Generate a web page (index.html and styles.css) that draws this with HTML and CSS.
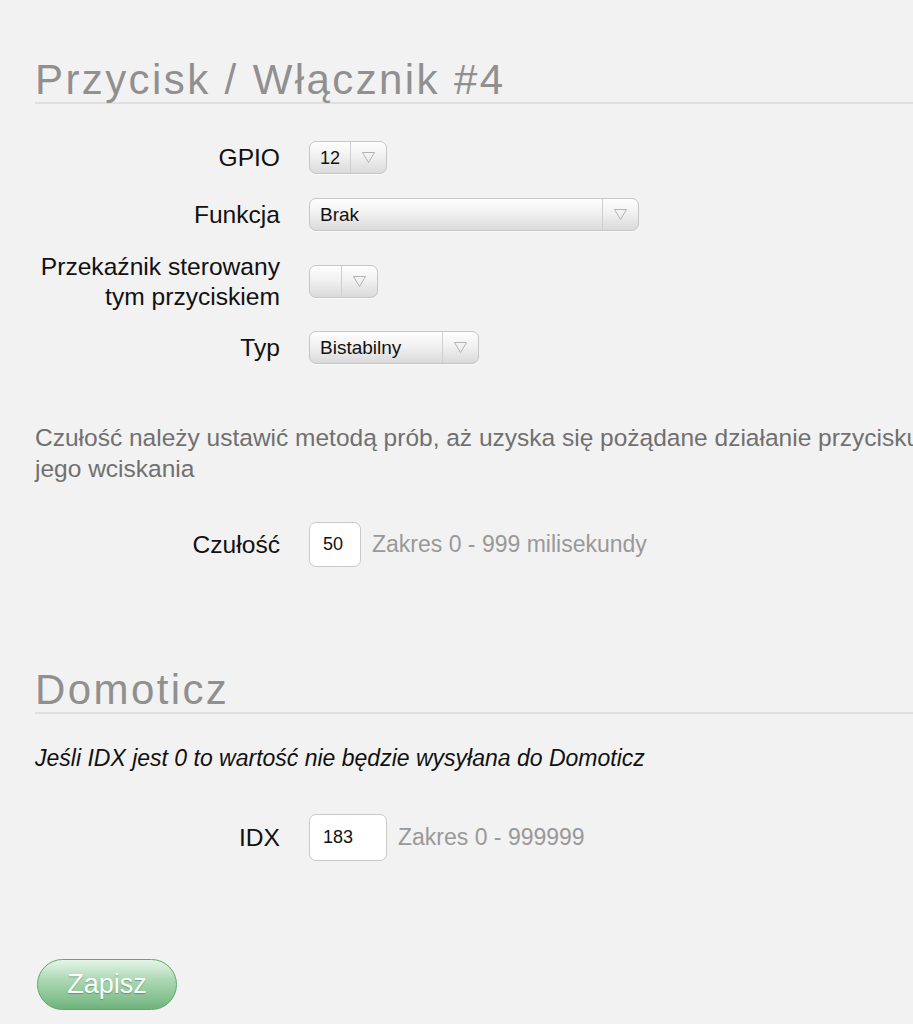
FILE: index.html
```html
<!DOCTYPE html>
<html lang="pl">
<head>
<meta charset="utf-8">
<title>Przycisk / Włącznik #4</title>
<link rel="stylesheet" href="styles.css">
</head>
<body>
<div class="page">
  <section class="section">
    <h2 class="section-title">Przycisk / Włącznik #4</h2>
    <div class="form">
      <div class="row row-gpio">
        <label class="label">GPIO</label>
        <div class="select select-gpio"><span class="select-value">12</span><span class="select-arrow"><svg width="13" height="11" viewBox="0 0 13 11"><polygon points="0.5,0.5 12.5,0.5 6.5,10.5" fill="none" stroke="#b3b3b3" stroke-width="1"/></svg></span></div>
      </div>
      <div class="row row-funkcja">
        <label class="label">Funkcja</label>
        <div class="select select-funkcja"><span class="select-value">Brak</span><span class="select-arrow"><svg width="13" height="11" viewBox="0 0 13 11"><polygon points="0.5,0.5 12.5,0.5 6.5,10.5" fill="none" stroke="#b3b3b3" stroke-width="1"/></svg></span></div>
      </div>
      <div class="row row-relay">
        <label class="label label-multi">Przekaźnik sterowany<br>tym przyciskiem</label>
        <div class="select select-relay"><span class="select-value"></span><span class="select-arrow"><svg width="13" height="11" viewBox="0 0 13 11"><polygon points="0.5,0.5 12.5,0.5 6.5,10.5" fill="none" stroke="#b3b3b3" stroke-width="1"/></svg></span></div>
      </div>
      <div class="row row-typ">
        <label class="label">Typ</label>
        <div class="select select-typ"><span class="select-value">Bistabilny</span><span class="select-arrow"><svg width="13" height="11" viewBox="0 0 13 11"><polygon points="0.5,0.5 12.5,0.5 6.5,10.5" fill="none" stroke="#b3b3b3" stroke-width="1"/></svg></span></div>
      </div>
    </div>
    <p class="note">Czułość należy ustawić metodą prób, aż uzyska się pożądane działanie przycisku podczas jego wciskania</p>
    <div class="row row-czulosc">
      <label class="label">Czułość</label>
      <div class="control"><div class="input input-small">50</div><span class="hint">Zakres 0 - 999 milisekundy</span></div>
    </div>
  </section>
  <section class="section section-domoticz">
    <h2 class="section-title">Domoticz</h2>
    <p class="info">Jeśli IDX jest 0 to wartość nie będzie wysyłana do Domoticz</p>
    <div class="row row-idx">
      <label class="label">IDX</label>
      <div class="control"><div class="input input-wide">183</div><span class="hint">Zakres 0 - 999999</span></div>
    </div>
  </section>
  <button class="btn-save">Zapisz</button>
</div>
</body>
</html>
```
FILE: styles.css
```css
html, body {
  margin: 0;
  padding: 0;
  background: #f2f2f2;
  overflow-x: hidden;
}
body {
  font-family: "Liberation Sans", Arial, sans-serif;
  color: #111;
}
.page {
  width: 1010px;
  padding: 58px 0 40px 35px;
}
.section-title {
  margin: 0;
  font-family: "Liberation Sans", Arial, sans-serif;
  font-weight: 300;
  font-size: 42px;
  line-height: 44px;
  letter-spacing: 2.4px;
  color: #909090;
  border-bottom: 2px solid #e0e0e0;
}
.form {
  margin-top: 37px;
}
.row {
  display: grid;
  grid-template-columns: 245px auto;
  column-gap: 29px;
  align-items: center;
  justify-content: start;
}
.row-funkcja { margin-top: 24px; }
.row-relay { margin-top: 19px; }
.row-typ { margin-top: 19px; }
.label {
  text-align: right;
  font-size: 24.6px;
  line-height: 30px;
  color: #111;
}
.label-multi {
  padding-top: 2px;
}
.select {
  display: flex;
  height: 31px;
  border: 1px solid #c6c6c6;
  border-radius: 7px;
  background: linear-gradient(#fefefe, #f1f1f1 45%, #dadada);
  box-shadow: 0 1px 0 rgba(255,255,255,0.6);
  box-sizing: content-box;
}
.select-value {
  flex: 1;
  padding-left: 10px;
  font-size: 19px;
  line-height: 32px;
  color: #111;
}
.select-arrow {
  width: 35px;
  border-left: 1px solid #cfcfcf;
  display: flex;
  align-items: center;
  justify-content: center;
}
.select-gpio { width: 76px; }
.select-gpio .select-value { font-size: 18px; }
.select-funkcja { width: 328px; }
.select-relay { width: 67px; }
.select-typ { width: 168px; }
.note {
  margin: 58px 0 0;
  font-size: 24.5px;
  line-height: 31px;
  color: #707070;
}
.row-czulosc { margin-top: 38px; }
.control {
  display: flex;
  align-items: center;
  gap: 11px;
}
.input {
  box-sizing: border-box;
  background: #fff;
  border: 1px solid #c9c9c9;
  border-radius: 7px;
  font-size: 18px;
  color: #111;
  padding-left: 13px;
  display: flex;
  align-items: center;
}
.input-small { width: 52px; height: 45px; }
.input-wide { width: 78px; height: 47px; }
.hint {
  font-size: 23px;
  color: #999;
}
.section-domoticz {
  margin-top: 101px;
}
.info {
  margin: 29px 0 0;
  font-size: 23px;
  line-height: 30px;
  font-style: italic;
  color: #111;
}
.row-idx { margin-top: 41px; }
.btn-save {
  display: block;
  margin: 98px 0 0 2px;
  width: 140px;
  height: 51px;
  border: 1px solid #5ea96c;
  border-radius: 26px;
  background: linear-gradient(#e6f5e8, #acd8b4 40%, #80be8c 85%, #6db27b);
  color: #fff;
  font-family: "Liberation Sans", Arial, sans-serif;
  font-size: 27px;
  text-shadow: 0 1px 1px rgba(40,90,50,0.45);
  padding: 0;
}
```
